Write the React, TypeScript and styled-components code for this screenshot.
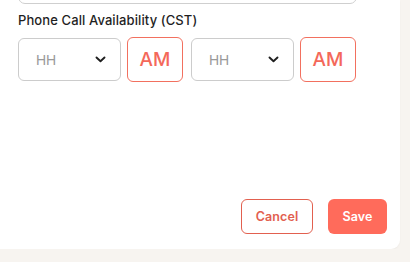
import styled, { createGlobalStyle } from 'styled-components'

const GlobalStyle = createGlobalStyle`
  html, body {
    margin: 0;
    padding: 0;
    background: #f7f4f0;
    font-family: Inter, "Liberation Sans", sans-serif;
  }
`

const ChevronDown = () => (
  <svg width="11" height="7" viewBox="0 0 11 7" fill="none">
    <path d="M1.5 1.5L5.5 5.2l4-3.7" stroke="#1f1f1f" strokeWidth="1.9" strokeLinecap="round" strokeLinejoin="round" />
  </svg>
)

const TimePicker = () => (
  <Group>
    <Select>
      <Placeholder>HH</Placeholder>
      <ChevronDown />
    </Select>
    <MeridiemButton>AM</MeridiemButton>
  </Group>
)

export default function App() {
  return (
    <>
      <GlobalStyle />
      <Card>
        <Form>
          <TextField />
          <Label>Phone Call Availability (CST)</Label>
          <Row>
            <TimePicker />
            <TimePicker />
          </Row>
        </Form>
        <Footer>
          <CancelButton>Cancel</CancelButton>
          <SaveButton>Save</SaveButton>
        </Footer>
      </Card>
    </>
  )
}

const Card = styled.div`
  width: 400px;
  height: 249px;
  background: #ffffff;
  border-bottom-right-radius: 9px;
  box-shadow: 0 1px 2px rgba(0, 0, 0, 0.04);
  display: flex;
  flex-direction: column;
  overflow: hidden;
  box-sizing: border-box;
`

const Form = styled.div`
  display: flex;
  flex-direction: column;
  padding: 0 43px 0 18px;
`

const TextField = styled.div`
  height: 40px;
  margin-top: -36px;
  border: 1px solid #cfcfcf;
  border-radius: 7px;
  box-sizing: border-box;
`

const Label = styled.div`
  margin-top: 8px;
  font-size: 13px;
  line-height: 16px;
  font-weight: 500;
  color: #1f1f1f;
  letter-spacing: 0.1px;
`

const Row = styled.div`
  display: flex;
  gap: 8px;
  margin-top: 9px;
`

const Group = styled.div`
  display: flex;
  align-items: center;
  gap: 6px;
`

const Select = styled.div`
  width: 103px;
  height: 43px;
  box-sizing: border-box;
  border: 1px solid #cccccc;
  border-radius: 6px;
  display: flex;
  align-items: center;
  justify-content: space-between;
  padding: 0 14px 0 17px;
`

const Placeholder = styled.span`
  font-family: "Liberation Sans", sans-serif;
  font-size: 14px;
  color: #9a9a9a;
`

const MeridiemButton = styled.button`
  width: 56px;
  height: 45px;
  box-sizing: border-box;
  border: 1px solid #f2705f;
  border-radius: 6px;
  background: #ffffff;
  color: #f4685a;
  font-family: inherit;
  font-size: 19px;
  font-weight: 500;
  padding: 0;
`

const Footer = styled.div`
  margin-top: auto;
  display: flex;
  justify-content: flex-end;
  gap: 15px;
  padding: 0 13px 15px 0;
`

const BaseButton = styled.button`
  height: 35px;
  box-sizing: border-box;
  border-radius: 6px;
  font-family: inherit;
  font-size: 12.5px;
  font-weight: 600;
  letter-spacing: 0.1px;
  padding: 0;
`

const CancelButton = styled(BaseButton)`
  width: 72px;
  background: #ffffff;
  border: 1px solid #e2604f;
  color: #e2604f;
`

const SaveButton = styled(BaseButton)`
  width: 59px;
  background: #ff6b5b;
  border: none;
  color: #ffffff;
`
